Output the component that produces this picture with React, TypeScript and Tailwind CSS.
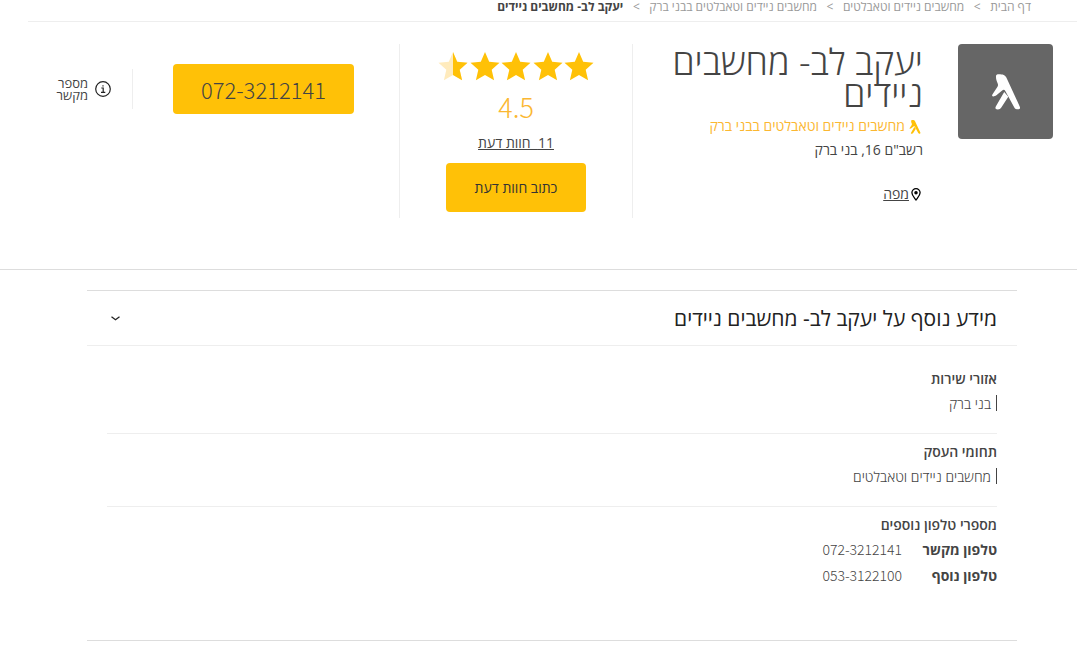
import React, { useState } from 'react';

const crumbs = ['דף הבית', 'מחשבים ניידים וטאבלטים', 'מחשבים ניידים וטאבלטים בבני ברק'];

const phones = [
  { label: 'טלפון מקשר', number: '072-3212141' },
  { label: 'טלפון נוסף', number: '053-3122100' },
];

const STAR = 'M15 0l4.2 9.8 10.3.9-7.8 7 2.4 10.6-9.1-5.4-9.1 5.4 2.4-10.6-7.8-7 10.3-.9z';

const Walker: React.FC<{ className: string }> = ({ className }) => (
  <svg viewBox="0 0 28 36" fill="currentColor" className={className} aria-hidden="true">
    <path d="M4 2.2C4 .8 5 .3 6.800.3c4 0 6.400.6 7.900 3.900L27.700 32.400c.8 1.800.2 2.900-1.600 2.900-1.700 0-3-.2-3.800-1.700L13.300 17c-.7-1.300-1.900-1.500-3.100-.5l-5.800 4.800c-1.500 1.200-4 1.700-4.300.5-.1-.8.4-1.600 1.100-2.600l4.300-6.500c.8-1.200.6-2.100.1-3.400C4.500 6.800 3.900 4.900 4 2.200z" />
    <path d="M12.2 18.100l4.100 4.700-7 10.800c-.8 1.300-1.900 1.900-3.400 1.900-2.200 0-3.100-1.200-2.100-3z" />
  </svg>
);

const Star: React.FC<{ half?: boolean }> = ({ half }) => (
  <svg viewBox="0 0 30 29" className="w-[30px] h-[29px]" aria-hidden="true">
    {half && (
      <clipPath id="half-star">
        <rect x="15" y="0" width="15" height="29" />
      </clipPath>
    )}
    {half && <path d={STAR} fill="#ffebbd" />}
    <path d={STAR} fill="#ffc107" clipPath={half ? 'url(#half-star)' : undefined} />
  </svg>
);

const Breadcrumbs: React.FC = () => (
  <nav className="me-7 ps-[46px] h-[22px] border-b border-[#eeeeee]">
    <ol className="flex items-center h-[14px] text-[12px] leading-[14px] text-[#999999]">
      {crumbs.map((crumb) => (
        <li key={crumb} className="flex items-center">
          <a href="#">{crumb}</a>
          <span className="w-[26px] text-center">&gt;</span>
        </li>
      ))}
      <li className="font-bold text-[#444444]">יעקב לב- מחשבים ניידים</li>
    </ol>
  </nav>
);

const BusinessHeader: React.FC = () => (
  <section className="flex gap-[35px] ps-6 pt-[22px] pb-[51px] border-b border-[#dddddd]">
    <div className="shrink-0 w-[95px] h-[95px] rounded bg-[#666666] text-white flex items-center justify-center">
      <Walker className="w-7 h-9" />
    </div>

    <div className="flex-1 grid grid-cols-[291fr_233fr_399fr] text-[#444444]">
      {/* Name and address */}
      <div className="border-e border-[#eeeeee] h-[174px]">
        <h1 className="pt-[2px] text-[36px] leading-8 font-light">יעקב לב- מחשבים ניידים</h1>
        <a href="#" className="flex items-center gap-1 mt-1 ps-[2px] h-[22px] text-[14px] text-[#fbb731]">
          <Walker className="w-3 h-[14px] mt-1 text-[#ffc107]" />
          מחשבים ניידים וטאבלטים בבני ברק
        </a>
        <p className="mt-1 text-[14px] leading-5">רשב"ם 16, בני ברק</p>
        <a href="#" className="flex items-center mt-6 ps-[2px] text-[14px] leading-5">
          <svg viewBox="0 0 10 13" className="w-[10px] h-[13px] text-black" fill="none" stroke="currentColor" strokeWidth="1.3" aria-hidden="true">
            <path d="M5 12C3.5 9.800.9 7.400.9 4.800a4.100 4.100 0 0 1 8.200 0C9.100 7.400 6.500 9.800 5 12z" />
            <circle cx="5" cy="4.8" r="1.1" fill="currentColor" />
          </svg>
          <span className="ms-[2px] underline">מפה</span>
        </a>
      </div>

      {/* Rating */}
      <div className="border-e border-[#eeeeee] flex flex-col items-center">
        <div className="flex justify-between w-[156px] mt-2">
          <Star />
          <Star />
          <Star />
          <Star />
          <Star half />
        </div>
        <span className="mt-2 font-['Noto_Sans_CJK_JP',sans-serif] text-[27px] leading-9 font-light text-[#fbb731]">4.5</span>
        <a href="#" className="mt-2 text-[14px] leading-5 underline">
          11&nbsp; חוות דעת
        </a>
        <button className="mt-[10px] w-[140px] h-[49px] rounded bg-[#ffc107] text-[14px] text-[#333333]">
          כתוב חוות דעת
        </button>
      </div>

      {/* Phone */}
      <div className="flex items-center h-[90px] ps-[45px]">
        <a
          href="tel:0723212141"
          dir="ltr"
          className="w-[181px] h-[50px] rounded bg-[#ffc107] text-center text-[22px] leading-[50px] font-light font-['Noto_Sans_CJK_JP',sans-serif]"
        >
          072-3212141
        </a>
        <div className="flex items-center gap-[7px] ms-10 ps-[21px] h-10 border-s border-[#eeeeee]">
          <svg viewBox="0 0 16 16" className="w-4 h-4 text-[#222222]" fill="none" stroke="currentColor" aria-hidden="true">
            <circle cx="8" cy="8" r="7.3" strokeWidth="1.2" />
            <path d="M6.3 7H8.200v4.300M6 11.300h4.300M8 4.200v1.300" strokeWidth="1.2" />
          </svg>
          <span className="w-9 text-[13px] leading-3">מספר מקשר</span>
        </div>
      </div>
    </div>
  </section>
);

const InfoBlock: React.FC<{ title: string; value: string }> = ({ title, value }) => (
  <div className="pt-2 pb-5 border-b border-[#eeeeee]">
    <h3 className="text-[14px] leading-5 font-semibold">{title}</h3>
    <p className="flex mt-1 h-5 items-center text-[14px] font-light">
      <span className="w-px h-4 me-[5px] bg-[#444444]" />
      {value}
    </p>
  </div>
);

const MoreInfo: React.FC = () => {
  const [open, setOpen] = useState(true);

  return (
    <section className="mt-5 ms-[60px] me-[87px] border-y border-[#dddddd] text-[#444444]">
      <h2 className="border-b border-[#eeeeee] text-[#222222]">
        <button
          onClick={() => setOpen(!open)}
          aria-expanded={open}
          className="flex w-full items-center justify-between h-[54px] ps-5 pe-6"
        >
          <span className="pt-[2px] text-[21px]">מידע נוסף על יעקב לב- מחשבים ניידים</span>
          <svg viewBox="0 0 9 5" className="w-[9px] h-[5px]" fill="none" stroke="currentColor" strokeWidth="1.3" aria-hidden="true">
            <path d="M.5.8l4 3 4-3" />
          </svg>
        </button>
      </h2>
      {open && (
        <div className="px-5 pt-[15px] pb-[52px]">
          <InfoBlock title="אזורי שירות" value="בני ברק" />
          <InfoBlock title="תחומי העסק" value="מחשבים ניידים וטאבלטים" />
          <div className="pt-2">
            <h3 className="text-[14px] leading-5 font-semibold">מספרי טלפון נוספים</h3>
            <dl className="mt-px text-[14px]">
              {phones.map((phone) => (
                <div key={phone.number} className="flex h-[26px] items-center">
                  <dt className="w-[95px] font-bold">{phone.label}</dt>
                  <dd dir="ltr" className="font-['Noto_Sans_CJK_JP',sans-serif] font-light leading-6">{phone.number}</dd>
                </div>
              ))}
            </dl>
          </div>
        </div>
      )}
    </section>
  );
};

const App: React.FC = () => {
  return (
    <main dir="rtl" className="bg-white font-['Open_Sans',sans-serif]">
      <Breadcrumbs />
      <BusinessHeader />
      <MoreInfo />
    </main>
  );
};

export default App;
